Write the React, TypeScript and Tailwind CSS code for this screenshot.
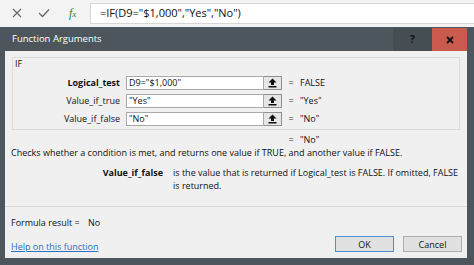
const ui = { fontFamily: '"Open Sans", "Noto Sans", sans-serif' };

const args = [
  { label: "Logical_test", bold: true, value: 'D9="$1,000"', result: "FALSE" },
  { label: "Value_if_true", bold: false, value: '"Yes"', result: '"Yes"' },
  { label: "Value_if_false", bold: false, value: '"No"', result: '"No"' },
];

function CollapseIcon() {
  return (
    <svg width="9" height="10" viewBox="0 0 9 10">
      <path d="M4.5 0.5 L8.5 4.5 L6 4.5 L6 7 L3 7 L3 4.5 L0.5 4.5 Z" fill="#111" />
      <rect x="0.5" y="8" width="8" height="1.5" fill="#111" />
    </svg>
  );
}

function ArgRow({ label, bold, value, result }: (typeof args)[number]) {
  return (
    <div className="flex items-center h-[14px]">
      <div className={`w-[113px] text-right pr-[6px] text-[9px] text-[#111] ${bold ? "font-bold" : ""}`}>{label}</div>
      <div className="w-[138px] h-[14px] bg-white border border-[#a9a9a9] flex items-center pl-[2px] text-[9px] text-[#111]">
        {value}
      </div>
      <div className="w-[18px] h-[14px] bg-[#e6e6e6] border border-[#8f8f8f] border-l-0 flex items-center justify-center">
        <CollapseIcon />
      </div>
      <div className="w-[18px] text-center text-[9px] text-[#333]">=</div>
      <div className="text-[9px] text-[#111]">{result}</div>
    </div>
  );
}

export default function App() {
  return (
    <div className="w-[474px] h-[265px] flex flex-col bg-[#4c565c] overflow-hidden" style={ui}>
      {/* formula bar */}
      <div className="h-[27px] bg-[#f3f3f3] flex items-start shrink-0">
        <div className="w-[90px] h-[26px] flex items-center">
          <svg width="10" height="10" viewBox="0 0 10 10" className="ml-[12px]">
            <path d="M1 1 L9 9 M9 1 L1 9" stroke="#666" strokeWidth="1.1" />
          </svg>
          <svg width="12" height="10" viewBox="0 0 12 10" className="ml-[16px]">
            <path d="M1 5 L4.5 8.5 L11 1.5" stroke="#666" strokeWidth="1.3" fill="none" />
          </svg>
          <span className="ml-[19px] text-[12px] italic text-[#2e7d32]" style={{ fontFamily: '"Liberation Serif", serif' }}>
            f<span className="text-[9px]">x</span>
          </span>
        </div>
        <div className="flex-1 mt-[3px] h-[21px] bg-white border border-[#d6d6d6] border-r-0 flex items-center pl-[9px] text-[11px] text-[#111]">
          =IF(D9="$1,000","Yes","No")
        </div>
      </div>

      {/* dialog */}
      <div className="flex-1 flex flex-col pl-[5px] pr-[7px] pb-[7px] pt-[1px]">
        <div className="h-[23px] flex items-center shrink-0">
          <div className="flex-1 pl-[7px] text-[9.5px] text-white">Function Arguments</div>
          <div className="w-[39px] h-[23px] bg-[#454e53] flex items-center justify-center text-[10px] font-bold text-[#111]">?</div>
          <div className="w-[35px] h-[23px] bg-[#cb5a4e] flex items-center justify-center">
            <svg width="8" height="8" viewBox="0 0 8 8">
              <path d="M1 1 L7 7 M7 1 L1 7" stroke="#111" strokeWidth="1.8" />
            </svg>
          </div>
        </div>

        <div className="flex-1 bg-[#f0f0f0] flex flex-col">
          {/* group box */}
          <div className="mx-[7px] mt-[6px] h-[73px] border border-[#dcdcdc] flex flex-col">
            <div className="pl-[2px] h-[12px] text-[9px] leading-[12px] text-[#111]">IF</div>
            <div className="mt-[6px] flex flex-col gap-[4px]">
              {args.map((a) => (
                <ArgRow key={a.label} {...a} />
              ))}
            </div>
          </div>

          <div className="flex h-[12px] items-center mt-[4px] text-[9px] text-[#111]">
            <div className="w-[277px]" />
            <div className="w-[18px] text-center text-[#333]">=</div>
            <div>"No"</div>
          </div>

          <div className="pl-[6px] mt-[1px] text-[9px] leading-[12px] text-[#111]">
            Checks whether a condition is met, and returns one value if TRUE, and another value if FALSE.
          </div>

          <div className="flex mt-[7px] text-[9px] leading-[13px] text-[#111]">
            <div className="w-[168px] text-right font-bold pr-[10px] shrink-0">Value_if_false</div>
            <div className="w-[293px]">
              is the value that is returned if Logical_test is FALSE. If omitted, FALSE is returned.
            </div>
          </div>

          <div className="mt-auto border-t border-[#dadada]" />
          <div className="h-[51px] flex">
            <div className="flex-1 pl-[6px] flex flex-col">
              <div className="mt-[9px] text-[9px] text-[#111]">
                Formula result = <span className="ml-[6px]">No</span>
              </div>
              <a className="mt-[10px] text-[9px] text-[#2a6fc4] underline">Help on this function</a>
            </div>
            <div className="flex gap-[9px] items-start mt-[29px] pr-[5px]">
              <button className="w-[59px] h-[16px] bg-[#e1e1e1] border border-[#4a90d9] text-[9px] text-[#111] leading-none">OK</button>
              <button className="w-[59px] h-[16px] bg-[#e1e1e1] border border-[#adadad] text-[9px] text-[#111] leading-none">Cancel</button>
            </div>
          </div>
        </div>
      </div>
    </div>
  );
}
